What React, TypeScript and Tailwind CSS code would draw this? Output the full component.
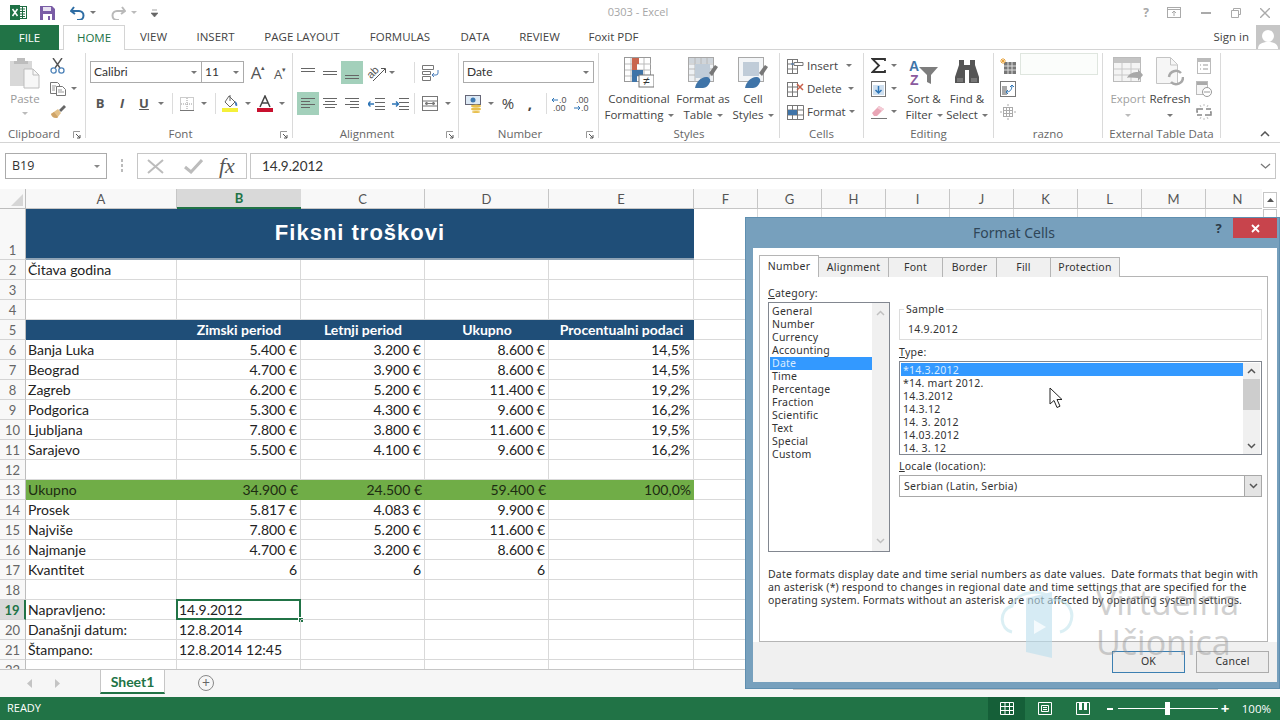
import type { ReactNode } from 'react';

const GRID =
  'grid grid-cols-[26px_151px_124px_124px_124px_145px_64px_64px_64px_64px_64px_64px_64px_64px_64px]';
const COLS = ['A', 'B', 'C', 'D', 'E', 'F', 'G', 'H', 'I', 'J', 'K', 'L', 'M', 'N'];

function Ic({ w, h, children }: { w: number; h: number; children: ReactNode }) {
  return (
    <svg width={w} height={h} viewBox={`0 0 ${w} ${h}`} className="shrink-0">
      {children}
    </svg>
  );
}

function Caret({ color = '#777777' }: { color?: string }) {
  return (
    <svg width="6" height="3" viewBox="0 0 6 3" className="shrink-0">
      <path d="M0 0h6L3 3z" fill={color} />
    </svg>
  );
}

function CaretCell({ w }: { w: string }) {
  return (
    <span className={`flex items-center justify-center ${w}`}>
      <Caret />
    </span>
  );
}

function Sep() {
  return <span className="h-[21px] w-px shrink-0 bg-[#dcdcdc]" />;
}

function Launcher() {
  return (
    <svg width="8" height="8" viewBox="0 0 8 8" className="absolute bottom-[-1px] right-[4px]">
      <path d="M.5 7V.5H7" fill="none" stroke="#9a9a9a" />
      <path d="M3 3l4 4M7 4v3H4" fill="none" stroke="#555" />
    </svg>
  );
}

function Group({
  w,
  label,
  launcher,
  children,
}: {
  w: string;
  label: string;
  launcher?: boolean;
  children: ReactNode;
}) {
  return (
    <div className={`flex h-[85px] shrink-0 flex-col border-r border-[#dadada] ${w}`}>
      <div className="h-[73px]">{children}</div>
      <div
        className={`relative h-[12px] text-center text-[11.5px] leading-[16px] text-[#666] ${launcher ? 'pr-[17px]' : ''}`}
      >
        {label}
        {launcher && <Launcher />}
      </div>
    </div>
  );
}

function Large({
  w,
  icon,
  lines,
  muted,
  caretOnly,
}: {
  w: string;
  icon: ReactNode;
  lines: string[];
  muted?: boolean;
  caretOnly?: boolean;
}) {
  return (
    <div className={`flex flex-col items-center leading-[16px] ${w} ${muted ? 'text-[#a0a0a0]' : ''}`}>
      <div className="flex h-[38px] items-center justify-center">{icon}</div>
      <span className="whitespace-nowrap">{lines[0]}</span>
      {caretOnly ? (
        <span className="flex h-[16px] items-center">
          <Caret color={muted ? '#bbbbbb' : '#777777'} />
        </span>
      ) : (
        <span className="flex items-center gap-[4px] whitespace-nowrap">
          {lines[1]}
          <Caret />
        </span>
      )}
    </div>
  );
}

function Tb({ w, on, children }: { w: string; on?: boolean; children: ReactNode }) {
  return (
    <span className={`flex h-full shrink-0 items-center justify-center ${w} ${on ? 'bg-[#a3d0bb]' : ''}`}>
      {children}
    </span>
  );
}

function Lines({ rows }: { rows: [number, number, number][] }) {
  return (
    <Ic w={16} h={14}>
      {rows.map(([x1, x2, y]) => (
        <path key={`${x1}-${y}`} d={`M${x1} ${y}.5H${x2}`} stroke="#666" />
      ))}
    </Ic>
  );
}

function Combo({ w, text, cls }: { w: string; text: string; cls?: string }) {
  return (
    <div
      className={`flex h-[22px] shrink-0 items-center justify-between border border-[#ababab] bg-white pl-[3px] pr-[4px] text-[12px] text-[#333] ${w} ${cls ?? ''}`}
    >
      <span>{text}</span>
      <Caret />
    </div>
  );
}

// ribbon drawings
const paste = (
  <Ic w={30} h={32}>
    <rect x="0" y="4" width="22" height="25" fill="#d8d8d8" />
    <path d="M7 4V1h8v3h3v3H4V4z" fill="#bdbdbd" />
    <path d="M14 12h9l6 6v13H14z" fill="#f7f7f7" stroke="#bdbdbd" />
    <path d="M23 12v6h6" fill="none" stroke="#bdbdbd" />
  </Ic>
);
const scissors = (
  <Ic w={15} h={16}>
    <path d="M3 0l7 10M12 0L5 10" stroke="#555" strokeWidth="1.4" />
    <circle cx="3.6" cy="12.5" r="2.6" fill="none" stroke="#4d82b8" strokeWidth="1.3" />
    <circle cx="11.4" cy="12.5" r="2.6" fill="none" stroke="#4d82b8" strokeWidth="1.3" />
  </Ic>
);
const copy = (
  <Ic w={16} h={14}>
    <path d="M.5.5h7l2 2v9h-9z" fill="#fff" stroke="#777" />
    <path d="M6.5 4.5h6l3 3v6h-9z" fill="#fff" stroke="#777" />
    <path d="M2 4h4M2 6h3M2 8h3M8 8h4M8 10h6" stroke="#999" />
  </Ic>
);
const brush = (
  <Ic w={17} h={15}>
    <path d="M9 6l5-5 2 2-5 5z" fill="#666" />
    <path d="M1 10l7-5 3 4-4 5c-3 0-5-1-6-4z" fill="#e3c088" />
    <path d="M1 10l3-2 4 5-1 1c-3 0-5-1-6-4z" fill="#cfa468" />
  </Ic>
);
const borders = (
  <Ic w={14} h={14}>
    <rect x=".5" y=".5" width="13" height="13" fill="none" stroke="#999" strokeDasharray="1 1" />
    <path d="M7 1v12M1 7h12" stroke="#999" strokeDasharray="1 1" />
    <path d="M0 13.5h14" stroke="#777" />
  </Ic>
);
const fillColor = (
  <Ic w={17} h={17}>
    <path d="M7 1l6 6-5 5-5-5z" fill="#fff" stroke="#666" />
    <path d="M8 0v6" stroke="#666" />
    <path d="M13 6l2 2c0 1 1 3-.5 3S13 9 13 8z" fill="#4a7ebb" />
    <rect x="0" y="13" width="16" height="4" fill="#f4f03a" />
  </Ic>
);
const fontColor = (
  <Ic w={16} h={17}>
    <path d="M3 12L8 1l5 11M5 8h6" fill="none" stroke="#444" strokeWidth="1.5" />
    <rect x="0" y="13" width="16" height="4" fill="#c8102e" />
  </Ic>
);
const orientation = (
  <svg width="22" height="18" viewBox="0 0 22 18" className="shrink-0 overflow-visible">
    <text
      x="1"
      y="12"
      fontSize="11"
      fontFamily="Liberation Sans"
      fill="#555"
      transform="rotate(-45 7 9)"
    >
      ab
    </text>
    <path d="M7 17L19 5M15 4.500h4.500V9" fill="none" stroke="#555" />
  </svg>
);
const wrap = (
  <Ic w={17} h={16}>
    <path d="M.5.5h11v4H.5zM.5 6.500h8v3h-8zM.5 11.500h8v4h-8z" fill="#fff" stroke="#777" />
    <path d="M16 5v3a2 2 0 0 1-2 2h-4M12 8l-2 2 2 2" fill="none" stroke="#4a7ebb" />
  </Ic>
);
const merge = (
  <Ic w={16} h={15}>
    <rect x=".5" y=".5" width="15" height="14" fill="#fff" stroke="#777" />
    <path d="M1 5h14M1 10h14M3 7.500h10M3 7.500l2-1.500v3zM13 7.500l-2-1.500v3z" fill="none" stroke="#777" />
  </Ic>
);
const indent = (arrowRight: boolean) => (
  <Ic w={17} h={12}>
    <path d="M7 .5h10M7 4.500h10M7 8.500h10M7 11.500h10" stroke="#666" />
    {arrowRight ? (
      <path d="M0 6h6M4 3.500L6.500 6 4 8.500" fill="none" stroke="#2e75b6" strokeWidth="1.4" />
    ) : (
      <path d="M6 6H0M2.500 3.500L0 6l2.500 2.500" fill="none" stroke="#2e75b6" strokeWidth="1.4" />
    )}
  </Ic>
);
const accounting = (
  <Ic w={18} h={18}>
    <rect x=".5" y=".5" width="15" height="9" fill="#dce9f5" stroke="#667" />
    <circle cx="8" cy="5" r="2.500" fill="#3d78b0" />
    <ellipse cx="11" cy="11" rx="5" ry="1.500" fill="#e8c04e" />
    <ellipse cx="11" cy="14" rx="5" ry="1.500" fill="#e8c04e" />
    <ellipse cx="11" cy="17" rx="4" ry="1" fill="#e8c04e" />
  </Ic>
);
const decimals = (top: string, bottom: string, arrowFirst: boolean) => (
  <svg width="20" height="18" viewBox="0 0 20 18" className="shrink-0 overflow-visible">
    <text x={arrowFirst ? 9 : 4} y="8" fontSize="9" fontFamily="Liberation Sans" fill="#555">
      {top}
    </text>
    <text x={arrowFirst ? 3 : 9} y="16" fontSize="9" fontFamily="Liberation Sans" fill="#555">
      {bottom}
    </text>
    {arrowFirst ? (
      <path d="M8 5H2M4 3L2 5l2 2" fill="none" stroke="#2e75b6" />
    ) : (
      <path d="M2 13h6M6 11l2 2-2 2" fill="none" stroke="#2e75b6" />
    )}
  </svg>
);
const conditional = (
  <Ic w={30} h={31}>
    <rect x=".5" y=".5" width="26" height="24" fill="#fff" stroke="#999" />
    <path d="M7 1v24M20 1v24M1 7h26M1 13h26M1 19h26" stroke="#bbb" />
    <rect x="8" y="1" width="7" height="6" fill="#c9664f" />
    <rect x="8" y="7" width="5" height="6" fill="#c9664f" />
    <rect x="8" y="13" width="11" height="6" fill="#3f74a8" />
    <rect x="8" y="19" width="5" height="6" fill="#3f74a8" />
    <rect x="15" y="18" width="15" height="12" fill="#fff" stroke="#777" />
    <text x="22.500" y="28" textAnchor="middle" fontSize="12" fontFamily="Liberation Sans" fill="#333">
      ≠
    </text>
  </Ic>
);
const tablePaint = (
  <Ic w={30} h={31}>
    <rect x=".5" y=".5" width="25" height="24" fill="#eef1f4" stroke="#a8a8a8" />
    <rect x="1" y="1" width="24" height="5" fill="#cfd5db" />
    <path d="M7 1v24M13 1v24M19 1v24M1 7h24M1 12h24M1 18h24" stroke="#b8b8b8" />
    <rect x="7" y="7" width="15" height="14" fill="#c0ccd8" />
    <path d="M21 16l6-8 3 2-6 9z" fill="#777" />
    <path d="M7 31c1-6 6-11 11-11 3 0 5 2 4 5-1 3-4 6-7 6z" fill="#3f74a8" />
  </Ic>
);
const cellPaint = (
  <Ic w={30} h={31}>
    <rect x=".5" y=".5" width="25" height="24" fill="#f3f5f7" stroke="#a8a8a8" />
    <rect x="5" y="5" width="16" height="14" fill="#c0ccd8" />
    <path d="M21 16l6-8 3 2-6 9z" fill="#777" />
    <path d="M7 31c1-6 6-11 11-11 3 0 5 2 4 5-1 3-4 6-7 6z" fill="#3f74a8" />
  </Ic>
);
const cellsIcon = (kind: 'insert' | 'delete' | 'format') => (
  <Ic w={17} h={16}>
    <rect x=".5" y="1.500" width="10" height="14" fill="#fff" stroke="#777" />
    <path d="M5.500 2v13M1 6h9M1 11h9" stroke="#777" />
    {kind === 'insert' && <path d="M7 4.500h9v3H7z" fill="#fff" stroke="#777" />}
    {kind === 'insert' && <path d="M7 6H4" stroke="#4a7ebb" />}
    {kind === 'delete' && <path d="M10 3l6 6M16 3l-6 6" stroke="#c8604a" strokeWidth="1.5" />}
    {kind === 'format' && <rect x="1" y="6" width="9" height="5" fill="#3f74a8" />}
    {kind === 'format' && <path d="M11 1.500h5.500v14H11M11 6h5M11 11h5" fill="none" stroke="#777" />}
  </Ic>
);
const sigma = (
  <Ic w={15} h={15}>
    <path d="M14 3V1H1.500L8 7.500 1.500 14H14v-2" fill="none" stroke="#333" strokeWidth="1.800" />
  </Ic>
);
const fillDown = (
  <Ic w={15} h={16}>
    <rect x=".5" y=".5" width="14" height="15" fill="#fff" stroke="#777" />
    <rect x="2" y="4" width="11" height="10" fill="#cfe0f0" />
    <path d="M7.500 5v7M4.500 9l3 3 3-3" fill="none" stroke="#2e75b6" strokeWidth="1.500" />
  </Ic>
);
const eraser = (
  <Ic w={17} h={14}>
    <path d="M1 8l7-7 5 3-7 7H3z" fill="#e9a6b6" />
    <path d="M8 1l5 3-2 2-5-3z" fill="#f3ccd6" />
    <path d="M0 13.500h16" stroke="#777" />
  </Ic>
);
const sortFilter = (
  <svg width="30" height="28" viewBox="0 0 30 28" className="shrink-0 overflow-visible">
    <text x="0" y="13" fontSize="14" fontWeight="700" fontFamily="Liberation Sans" fill="#3f74a8">
      A
    </text>
    <text x="1" y="27" fontSize="14" fontWeight="700" fontFamily="Liberation Sans" fill="#8a5a9e">
      Z
    </text>
    <path d="M10 9h19l-7 8v9l-4-2v-7z" fill="#7d7d7d" />
  </svg>
);
const binoculars = (
  <Ic w={26} h={24}>
    <path d="M5 0h5v5h6V0h5v5l4 12v6H15V10h-4v13H1v-6L5 5z" fill="#555" />
    <path d="M3 18h6v4H3zM17 18h6v4h-6z" fill="#777" />
  </Ic>
);
const newTable = (
  <Ic w={16} h={16}>
    <rect x="4" y="4" width="12" height="12" fill="#777" />
    <path d="M8 4v12M12 4v12M4 8h12M4 12h12" stroke="#ddd" />
    <path d="M3 0v6M0 3h6M1 1l4 4M5 1L1 5" stroke="#e8a33d" />
  </Ic>
);
const pivot = (
  <Ic w={16} h={16}>
    <rect x=".5" y=".5" width="15" height="15" fill="#fff" stroke="#777" />
    <rect x="2" y="5" width="5" height="9" fill="#a8a8a8" />
    <path d="M6 11c4 0 6-2 6-7M10 6l2-2 2 2M8 9l-2 2 2 2" fill="none" stroke="#2e75b6" />
  </Ic>
);
const moveTable = (
  <Ic w={16} h={16}>
    <rect x="3.500" y="3.500" width="9" height="9" fill="#fff" stroke="#aaa" />
    <path d="M6.500 4v8M9.500 4v8M4 6.500h8M4 9.500h8M8 0v2M8 14v2M0 8h2M14 8h2" stroke="#aaa" />
  </Ic>
);
const exportIcon = (
  <Ic w={30} h={30}>
    <rect x=".5" y=".5" width="27" height="24" fill="#f4f4f4" stroke="#bbb" />
    <rect x="1" y="1" width="26" height="5" fill="#c4c4c4" />
    <path d="M9 6v18M18 6v18M1 12h26M1 18h26" stroke="#c8c8c8" />
    <path d="M14 21c2-5 7-6 11-6v-3l5 6-5 6v-3c-4 0-8-1-11 0z" fill="#a8a8a8" />
  </Ic>
);
const refreshIcon = (
  <Ic w={28} h={30}>
    <path d="M.5.5h14l7 7v19H.5z" fill="#f6f6f6" stroke="#c4c4c4" />
    <path d="M14.500 1v7h7" fill="none" stroke="#c4c4c4" />
    <path d="M13 20a7 7 0 0 1 12-4M27 20a7 7 0 0 1-12 5" fill="none" stroke="#a8a8a8" strokeWidth="2.500" />
  </Ic>
);
const propsIcon = (
  <Ic w={14} h={16}>
    <rect x=".5" y=".5" width="13" height="15" fill="#fff" stroke="#bbb" />
    <rect x="1" y="1" width="12" height="3" fill="#bbb" />
    <path d="M3 7h1M6 7h5M3 11h1M6 11h5" stroke="#999" />
  </Ic>
);
const openBrowser = (
  <Ic w={16} h={16}>
    <rect x=".5" y=".5" width="11" height="13" fill="#f6f6f6" stroke="#bbb" />
    <rect x="1" y="1" width="10" height="3" fill="#aaa" />
    <circle cx="11" cy="11" r="4.500" fill="#fff" stroke="#999" />
    <path d="M8 11h6" stroke="#999" />
  </Ic>
);
const unlink = (
  <Ic w={16} h={16}>
    <path d="M2 8H1V5h6M14 8h1v3H9M1 11h5M15 5h-5" fill="none" stroke="#888" strokeWidth="1.500" />
    <path d="M8 0v2M4 1l1 2M12 1l-1 2M8 14v2M4 15l1-2M12 15l-1-2" stroke="#c0c0c0" />
  </Ic>
);

function IconRow({ icon, label, gap }: { icon: ReactNode; label: string; gap: string }) {
  return (
    <div className="flex h-[23px] items-center">
      {icon}
      <span className="ml-[3px]">{label}</span>
      <span className={gap}>
        <Caret />
      </span>
    </div>
  );
}

function Ribbon() {
  return (
    <div className="flex h-[93px] shrink-0 border-b border-[#d4d4d4] pt-[3px] text-[11.5px] text-[#444]">
      <Group w="w-[86px]" label="Clipboard" launcher>
        <div className="flex">
          <div className="flex w-[50px] flex-col items-center text-[#9a9a9a]">
            <div className="mt-[4px] h-[34px]">{paste}</div>
            <span className="leading-[16px]">Paste</span>
            <span className="mt-[5px]">
              <Caret color="#bbbbbb" />
            </span>
          </div>
          <div className="flex flex-col pt-px">
            <div className="flex h-[23px] items-center">{scissors}</div>
            <div className="flex h-[23px] items-center">
              {copy}
              <span className="ml-[5px]">
                <Caret />
              </span>
            </div>
            <div className="flex h-[23px] items-center">{brush}</div>
          </div>
        </div>
      </Group>
      <Group w="w-[207px]" label="Font" launcher>
        <div className="flex h-[30px] items-end pl-[4px]">
          <Combo w="w-[112px]" text="Calibri" cls="[font-family:Lato,sans-serif]" />
          <Combo w="w-[43px] -ml-px" text="11" cls="[font-family:Lato,sans-serif]" />
          <span className="ml-[3px] flex w-[22px] items-start justify-center text-[17px] leading-[20px] text-[#555]">
            A<span className="mt-[1px] text-[7px] leading-[7px]">▴</span>
          </span>
          <span className="flex w-[22px] items-start justify-center pt-[3px] text-[13px] leading-[17px] text-[#555]">
            A<span className="text-[7px] leading-[7px]">▾</span>
          </span>
        </div>
        <div className="mt-[9px] flex h-[23px] items-center pl-[3px]">
          <Tb w="w-[22px]">
            <span className="text-[13px] font-bold text-[#555]">B</span>
          </Tb>
          <Tb w="w-[22px]">
            <span className="text-[13px] font-bold italic text-[#555]">I</span>
          </Tb>
          <Tb w="w-[22px]">
            <span className="text-[13px] font-bold text-[#555] underline">U</span>
          </Tb>
          <CaretCell w="w-[12px]" />
          <span className="ml-[5px] flex">
            <Sep />
          </span>
          <Tb w="w-[28px]">{borders}</Tb>
          <CaretCell w="w-[6px]" />
          <span className="ml-[8px] flex">
            <Sep />
          </span>
          <Tb w="w-[29px]">{fillColor}</Tb>
          <CaretCell w="w-[5px]" />
          <Tb w="w-[30px]">{fontColor}</Tb>
          <CaretCell w="w-[4px]" />
        </div>
      </Group>
      <Group w="w-[166px]" label="Alignment" launcher>
        <div className="mt-[8px] flex h-[23px] items-center pl-[4px]">
          <Tb w="w-[22px]">
            <Lines rows={[[1, 15, 2], [1, 15, 5]]} />
          </Tb>
          <Tb w="w-[22px]">
            <Lines rows={[[1, 15, 5], [1, 15, 8]]} />
          </Tb>
          <Tb w="w-[22px]" on>
            <Lines rows={[[1, 15, 9], [1, 15, 12]]} />
          </Tb>
          <Tb w="w-[24px] ml-[2px]">{orientation}</Tb>
          <CaretCell w="w-[6px]" />
          <span className="ml-[19px] flex">
            <Sep />
          </span>
          <Tb w="w-[30px]">{wrap}</Tb>
        </div>
        <div className="mt-[8px] flex h-[23px] items-center pl-[4px]">
          <Tb w="w-[22px]" on>
            <Lines rows={[[1, 15, 1], [1, 10, 4], [1, 15, 7], [1, 10, 10]]} />
          </Tb>
          <Tb w="w-[22px]">
            <Lines rows={[[1, 15, 1], [3, 13, 4], [1, 15, 7], [3, 13, 10]]} />
          </Tb>
          <Tb w="w-[22px]">
            <Lines rows={[[1, 15, 1], [6, 15, 4], [1, 15, 7], [6, 15, 10]]} />
          </Tb>
          <Tb w="w-[23px] ml-[2px]">{indent(false)}</Tb>
          <Tb w="w-[24px]">{indent(true)}</Tb>
          <span className="ml-[2px] flex">
            <Sep />
          </span>
          <Tb w="w-[30px]">{merge}</Tb>
          <CaretCell w="w-[6px]" />
        </div>
      </Group>
      <Group w="w-[140px]" label="Number" launcher>
        <div className="flex h-[30px] items-end pl-[4px]">
          <Combo w="w-[131px]" text="Date" cls="[font-family:Lato,sans-serif]" />
        </div>
        <div className="mt-[9px] flex h-[23px] items-center pl-[4px]">
          <Tb w="w-[22px]">{accounting}</Tb>
          <CaretCell w="w-[12px]" />
          <Tb w="w-[22px]">
            <span className="text-[15px] text-[#444]">%</span>
          </Tb>
          <Tb w="w-[22px]">
            <span className="text-[15px] font-bold text-[#444]">,</span>
          </Tb>
          <span className="ml-[5px] flex">
            <Sep />
          </span>
          <Tb w="w-[22px] ml-[2px]">{decimals('.0', '.00', true)}</Tb>
          <Tb w="w-[22px]">{decimals('.00', '.0', false)}</Tb>
        </div>
      </Group>
      <Group w="w-[181px]" label="Styles">
        <div className="flex pl-[3px]">
          <Large w="w-[74px]" icon={conditional} lines={['Conditional', 'Formatting']} />
          <Large w="w-[54px]" icon={tablePaint} lines={['Format as', 'Table']} />
          <Large w="w-[46px]" icon={cellPaint} lines={['Cell', 'Styles']} />
        </div>
      </Group>
      <Group w="w-[84px]" label="Cells">
        <div className="flex flex-col pl-[7px] pt-px">
          <IconRow icon={cellsIcon('insert')} label="Insert" gap="ml-[8px]" />
          <IconRow icon={cellsIcon('delete')} label="Delete" gap="ml-[6px]" />
          <IconRow icon={cellsIcon('format')} label="Format" gap="ml-[3px]" />
        </div>
      </Group>
      <Group w="w-[130px]" label="Editing">
        <div className="flex">
          <div className="flex w-[35px] flex-col pl-[7px] pt-px">
            <div className="flex h-[23px] items-center gap-[5px]">
              {sigma}
              <Caret />
            </div>
            <div className="flex h-[23px] items-center gap-[5px]">
              {fillDown}
              <Caret />
            </div>
            <div className="flex h-[23px] items-center gap-[3px]">
              {eraser}
              <Caret />
            </div>
          </div>
          <Large w="w-[50px]" icon={sortFilter} lines={['Sort &', 'Filter']} />
          <Large w="w-[36px]" icon={binoculars} lines={['Find &', 'Select']} />
        </div>
      </Group>
      <Group w="w-[109px]" label="razno">
        <div className="flex">
          <div className="flex flex-col pl-[6px] pt-px">
            <div className="flex h-[23px] items-center">{newTable}</div>
            <div className="flex h-[23px] items-center">{pivot}</div>
            <div className="flex h-[23px] items-center">{moveTable}</div>
          </div>
          <div className="ml-[4px] h-[22px] w-[78px] border border-[#dfe6df] bg-[#fbfdfb]" />
        </div>
      </Group>
      <Group w="w-[118px]" label="External Table Data">
        <div className="flex pl-[2px]">
          <Large w="w-[46px]" icon={exportIcon} lines={['Export']} muted caretOnly />
          <Large w="w-[38px]" icon={refreshIcon} lines={['Refresh']} caretOnly />
          <div className="ml-[7px] flex w-[16px] flex-col items-center pt-px">
            <div className="flex h-[23px] items-center">{propsIcon}</div>
            <div className="flex h-[23px] items-center">{openBrowser}</div>
            <div className="flex h-[23px] items-center">{unlink}</div>
          </div>
        </div>
      </Group>
      <svg width="10" height="6" viewBox="0 0 10 6" className="mb-[5px] ml-auto mr-[10px] self-end">
        <path d="M1 5l4-4 4 4" fill="none" stroke="#555" strokeWidth="1.500" />
      </svg>
    </div>
  );
}

function TitleBar() {
  return (
    <div className="grid h-[25px] shrink-0 grid-cols-[1fr_auto_1fr] items-center">
      <div className="flex items-center pl-[10px]">
        <Ic w={17} h={15}>
          <rect x="7.500" y="1.500" width="9" height="12" fill="#fff" stroke="#1e6b41" />
          <path d="M10 4h5M10 6.500h5M10 9h5M10 11.500h5M12.500 2v11" stroke="#1e6b41" />
          <rect x="0" y="0" width="10" height="15" fill="#1e7145" />
          <path d="M2.500 4l5 7M7.500 4l-5 7" stroke="#fff" strokeWidth="1.500" />
        </Ic>
        <span className="ml-[13px]">
          <Ic w={15} h={14}>
            <path d="M0 0h12l3 3v11H0z" fill="#7a5da6" />
            <rect x="3" y="1" width="8" height="4" fill="#e8e2f1" />
            <rect x="3" y="8" width="9" height="6" fill="#fff" />
            <rect x="8" y="10" width="2" height="4" fill="#7a5da6" />
          </Ic>
        </span>
        <span className="ml-[15px]">
          <Ic w={15} h={14}>
            <path d="M4 1L1 5l4 3M1.500 5H9a4.500 4.500 0 0 1 0 9H7" fill="none" stroke="#2e6da4" strokeWidth="2" />
          </Ic>
        </span>
        <span className="ml-[5px]">
          <Caret />
        </span>
        <span className="ml-[15px]">
          <Ic w={15} h={14}>
            <path d="M11 1l3 4-4 3M13.500 5H6a4.500 4.500 0 0 0 0 9h2" fill="none" stroke="#b9b9b9" strokeWidth="2" />
          </Ic>
        </span>
        <span className="ml-[5px]">
          <Caret color="#bbbbbb" />
        </span>
        <span className="ml-[14px]">
          <Ic w={7} h={8}>
            <path d="M1 1h5M0 4h7L3.500 8z" fill="#666" stroke="#666" strokeWidth=".6" />
          </Ic>
        </span>
      </div>
      <span className="pr-[4px] text-[11px] text-[#a6a6a6]">0303 - Excel</span>
      <div className="flex items-center justify-end text-[#a8a8a8]">
        <span className="mr-[18px] text-[12px] font-bold">?</span>
        <span className="mr-[20px]">
          <Ic w={14} h={11}>
            <rect x=".5" y=".5" width="13" height="10" fill="none" stroke="#aaa" />
            <path d="M0 2.500h14M7 9V4M5 6l2-2 2 2" fill="none" stroke="#aaa" />
          </Ic>
        </span>
        <span className="mr-[20px]">
          <Ic w={10} h={2}>
            <rect width="10" height="2" fill="#aaa" />
          </Ic>
        </span>
        <span className="mr-[19px]">
          <Ic w={10} h={10}>
            <path d="M2.500 2.500V.5h7v6H7.500M.5 2.500h7v7h-7z" fill="none" stroke="#aaa" />
          </Ic>
        </span>
        <span className="mr-[10px]">
          <Ic w={10} h={10}>
            <path d="M0 0l10 10M10 0L0 10" stroke="#aaa" strokeWidth="1.400" />
          </Ic>
        </span>
      </div>
    </div>
  );
}

function TabBar() {
  const tabs: [string, string][] = [
    ['VIEW', 'w-[57px]'],
    ['INSERT', 'w-[67px]'],
    ['PAGE LAYOUT', 'w-[106px]'],
    ['FORMULAS', 'w-[90px]'],
    ['DATA', 'w-[60px]'],
    ['REVIEW', 'w-[69px]'],
    ['Foxit PDF', 'w-[79px]'],
  ];
  return (
    <div className="flex h-[25px] shrink-0 items-stretch border-b border-[#d4d4d4] text-[11.5px] text-[#444]">
      <div className="flex h-[25px] w-[59px] items-center justify-center bg-[#217346] text-white">FILE</div>
      <div className="ml-[4px] flex h-[25px] w-[62px] items-center justify-center border-x border-t border-[#d4d4d4] bg-white text-[#217346]">
        HOME
      </div>
      {tabs.map(([name, w]) => (
        <div key={name} className={`flex items-center justify-center ${w}`}>
          {name}
        </div>
      ))}
      <span className="ml-auto flex items-center pr-[7px]">Sign in</span>
      <div className="flex h-[24px] w-[24px] items-end justify-center overflow-hidden bg-[#c6c6c6]">
        <Ic w={20} h={21}>
          <circle cx="10" cy="8" r="6" fill="#fff" />
          <path d="M0 21c0-5 4-7 10-7s10 2 10 7z" fill="#fff" />
        </Ic>
      </div>
    </div>
  );
}

function FormulaBar() {
  return (
    <div className="flex h-[46px] shrink-0 items-start pl-[5px] pt-[10px]">
      <div className="flex h-[26px] w-[102px] items-center justify-between border border-[#ababab] bg-white pl-[6px] pr-[6px] text-[12.5px] text-[#333]">
        B19
        <Caret color="#888888" />
      </div>
      <span className="ml-[14px] mt-[6px] w-[2px]">
        <span className="block h-[3px] w-[2px] bg-[#bbb]" />
        <span className="mt-[2px] block h-[3px] w-[2px] bg-[#bbb]" />
        <span className="mt-[2px] block h-[3px] w-[2px] bg-[#bbb]" />
      </span>
      <div className="ml-[14px] flex h-[26px] w-[110px] items-center border border-[#c6c6c6] bg-white">
        <span className="ml-[9px]">
          <Ic w={17} h={15}>
            <path d="M1 1l15 13M16 1L1 14" stroke="#bcbcbc" strokeWidth="2" />
          </Ic>
        </span>
        <span className="ml-[20px]">
          <Ic w={19} h={15}>
            <path d="M1 8l6 5L18 1" fill="none" stroke="#bcbcbc" strokeWidth="3" />
          </Ic>
        </span>
        <span className="ml-[16px] [font-family:'Liberation_Serif',serif] text-[22px] italic leading-none text-[#555]">
          fx
        </span>
      </div>
      <div className="ml-[3px] flex h-[26px] w-[1026px] items-center justify-between border border-[#c6c6c6] bg-white pl-[11px] pr-[4px] [font-family:Lato,sans-serif] text-[13.5px] text-[#333]">
        14.9.2012
        <svg width="11" height="6" viewBox="0 0 11 6">
          <path d="M1 1l4.500 4L10 1" fill="none" stroke="#777" strokeWidth="1.300" />
        </svg>
      </div>
    </div>
  );
}

type RowDef = {
  n: number;
  a?: string;
  b?: string;
  c?: string;
  d?: string;
  e?: string;
  kind?: 'head' | 'total';
  left?: boolean;
};

const ROWS: RowDef[] = [
  { n: 2, a: 'Čitava godina' },
  { n: 3 },
  { n: 4 },
  { n: 5, b: 'Zimski period', c: 'Letnji period', d: 'Ukupno', e: 'Procentualni podaci', kind: 'head' },
  { n: 6, a: 'Banja Luka', b: '5.400 €', c: '3.200 €', d: '8.600 €', e: '14,5%' },
  { n: 7, a: 'Beograd', b: '4.700 €', c: '3.900 €', d: '8.600 €', e: '14,5%' },
  { n: 8, a: 'Zagreb', b: '6.200 €', c: '5.200 €', d: '11.400 €', e: '19,2%' },
  { n: 9, a: 'Podgorica', b: '5.300 €', c: '4.300 €', d: '9.600 €', e: '16,2%' },
  { n: 10, a: 'Ljubljana', b: '7.800 €', c: '3.800 €', d: '11.600 €', e: '19,5%' },
  { n: 11, a: 'Sarajevo', b: '5.500 €', c: '4.100 €', d: '9.600 €', e: '16,2%' },
  { n: 12 },
  { n: 13, a: 'Ukupno', b: '34.900 €', c: '24.500 €', d: '59.400 €', e: '100,0%', kind: 'total' },
  { n: 14, a: 'Prosek', b: '5.817 €', c: '4.083 €', d: '9.900 €' },
  { n: 15, a: 'Najviše', b: '7.800 €', c: '5.200 €', d: '11.600 €' },
  { n: 16, a: 'Najmanje', b: '4.700 €', c: '3.200 €', d: '8.600 €' },
  { n: 17, a: 'Kvantitet', b: '6', c: '6', d: '6' },
  { n: 18 },
  { n: 19, a: 'Napravljeno:', b: '14.9.2012', left: true },
  { n: 20, a: 'Današnji datum:', b: '12.8.2014', left: true },
  { n: 21, a: 'Štampano:', b: '12.8.2014 12:45', left: true },
  { n: 22 },
];

function RowHead({ n, tall }: { n: number; tall?: boolean }) {
  const active = n === 19;
  return (
    <div
      className={`flex justify-center border-b border-[#d4d4d4] text-[13px] ${tall ? 'items-end' : 'items-center'} ${
        active
          ? 'border-r-2 border-r-[#217346] bg-[#d9d9d9] font-bold text-[#217346]'
          : 'border-r border-r-[#bdbdbd] bg-[#f8f8f8] text-[#666]'
      }`}
    >
      {n}
    </div>
  );
}

function Row({ row }: { row: RowDef }) {
  const band =
    row.kind === 'head'
      ? 'bg-[#1f4e78] font-bold text-white justify-center'
      : row.kind === 'total'
        ? 'bg-[#70ad47] text-[#1d2b12] justify-end'
        : 'border-b border-r border-[#d9d9d9] text-[#222] justify-end';
  const first =
    row.kind === 'head'
      ? 'bg-[#1f4e78]'
      : row.kind === 'total'
        ? 'bg-[#70ad47] text-[#1d2b12]'
        : 'border-b border-r border-[#d9d9d9] text-[#222]';
  const vals = [row.b, row.c, row.d, row.e];
  return (
    <div className={`${GRID} h-[20px]`}>
      <RowHead n={row.n} />
      <div className={`flex items-center whitespace-nowrap pl-[2px] ${first}`}>{row.a}</div>
      {vals.map((v, i) => {
        const selected = row.n === 19 && i === 0;
        return (
          <div
            key={i}
            className={`relative flex items-center whitespace-nowrap px-[3px] ${band} ${row.left ? '!justify-start !pl-[2px]' : ''}`}
          >
            {v}
            {selected && (
              <>
                <span className="absolute inset-x-[-1px] bottom-[-1px] top-[-1px] border-2 border-[#217346]" />
                <span className="absolute bottom-[-4px] right-[-4px] h-[6px] w-[6px] border border-white bg-[#217346]" />
              </>
            )}
          </div>
        );
      })}
      {COLS.slice(5).map((c) => (
        <div key={c} className="border-b border-r border-[#d9d9d9]" />
      ))}
    </div>
  );
}

function Sheet() {
  return (
    <div className="flex min-h-0 flex-1 overflow-hidden bg-white [font-family:Lato,sans-serif] text-[14px] leading-[18px]">
      <div className="min-w-0 flex-1 overflow-hidden">
        <div className={`${GRID} h-[20px] text-[#555]`}>
          <div className="flex items-end justify-end border-b border-r border-[#bdbdbd] bg-[#f8f8f8] p-[2px]">
            <svg width="12" height="12" viewBox="0 0 12 12">
              <path d="M12 0v12H0z" fill="#d6d6d6" />
            </svg>
          </div>
          {COLS.map((c) => (
            <div
              key={c}
              className={`flex items-center justify-center text-[13px] ${
                c === 'B'
                  ? 'border-b-2 border-[#217346] bg-[#d9d9d9] font-bold text-[#217346]'
                  : 'border-b border-r border-[#c6c6c6] bg-[#f8f8f8]'
              }`}
            >
              {c}
            </div>
          ))}
        </div>
        <div className={`${GRID} h-[51px]`}>
          <RowHead n={1} tall />
          <div className="col-span-5 flex items-center justify-center border-b-2 border-[#8fa3b5] bg-[#1f4e78] pb-[2px] [font-family:'Liberation_Sans',sans-serif] text-[22px] font-bold tracking-[1px] text-white">
            Fiksni troškovi
          </div>
          {COLS.slice(5).map((c) => (
            <div key={c} className="border-b border-r border-[#d9d9d9]" />
          ))}
        </div>
        {ROWS.map((r) => (
          <Row key={r.n} row={r} />
        ))}
      </div>
      <div className="flex w-[18px] shrink-0 flex-col pl-px pt-[3px]">
        <div className="flex h-[16px] w-[14px] items-center justify-center border border-[#c6c6c6] bg-white">
          <svg width="7" height="4" viewBox="0 0 7 4">
            <path d="M0 4h7L3.500 0z" fill="#555" />
          </svg>
        </div>
        <div className="mt-px h-[40px] w-[14px] border border-[#c6c6c6] bg-white" />
      </div>
    </div>
  );
}

function SheetTabs() {
  return (
    <div className="flex h-[28px] shrink-0 items-start border-t border-[#c6c6c6] bg-[#f6f6f6]">
      <div className="flex h-[27px] w-[100px] items-center pl-[27px]">
        <Ic w={6} h={9}>
          <path d="M5 0v9L0 4.500z" fill="#c4c4c4" />
        </Ic>
        <span className="ml-[22px]">
          <Ic w={6} h={9}>
            <path d="M0 0v9l5-4.500z" fill="#c4c4c4" />
          </Ic>
        </span>
      </div>
      <div className="flex h-[24px] w-[65px] items-center justify-center border-x border-b-2 border-[#c6c6c6] border-b-[#217346] bg-white [font-family:Lato,sans-serif] text-[14px] font-bold text-[#217346]">
        Sheet1
      </div>
      <div className="ml-[33px] mt-[5px] flex h-[16px] w-[16px] items-center justify-center rounded-full border border-[#888] text-[14px] leading-none text-[#666]">
        +
      </div>
      <div className="ml-[579px] h-[20px] w-[425px] border border-[#c6c6c6] bg-white" />
    </div>
  );
}

function StatusBar() {
  return (
    <div className="flex h-[23px] shrink-0 items-center bg-[#217346] pl-[7px] text-[11px] text-white">
      READY
      <div className="ml-auto flex h-full items-center">
        <div className="flex h-full w-[37px] items-center justify-center bg-[#155f38]">
          <Ic w={14} h={13}>
            <path d="M.5.5h13v12H.5zM5 1v11M9.500 1v11M1 4.500h12M1 8.500h12" fill="none" stroke="#fff" />
          </Ic>
        </div>
        <div className="flex h-full w-[39px] items-center justify-center">
          <Ic w={14} h={13}>
            <path d="M.5.5h13v12H.5zM3.500 3.500h7v6h-7zM5 5.500h4M5 7.500h4" fill="none" stroke="#fff" />
          </Ic>
        </div>
        <div className="flex h-full w-[38px] items-center justify-center">
          <Ic w={14} h={13}>
            <path d="M.5.5h13v12H.5z" fill="none" stroke="#fff" />
            <path d="M3 1h3v7H3zM8 1h3v7H8z" fill="#fff" />
          </Ic>
        </div>
        <span className="ml-[5px] h-[2px] w-[6px] bg-white" />
        <div className="relative ml-[5px] h-px w-[100px] bg-white">
          <span className="absolute left-[47px] top-[-6px] h-[13px] w-[5px] bg-white" />
        </div>
        <span className="ml-[3px] flex w-[8px] items-center justify-center text-[15px] font-bold leading-none">+</span>
        <span className="w-[51px] pr-[9px] text-right text-[11.5px]">100%</span>
      </div>
    </div>
  );
}

function ListItems({ items, active, cls }: { items: string[]; active: string; cls: string }) {
  return (
    <>
      {items.map((t) => (
        <div
          key={t}
          className={`h-[13px] whitespace-nowrap pl-[2px] ${cls} ${t === active ? 'bg-[#3399ff] text-[#d9ecff]' : ''}`}
        >
          {t}
        </div>
      ))}
    </>
  );
}

function Chev({ up, color = '#555' }: { up?: boolean; color?: string }) {
  return (
    <svg width="9" height="6" viewBox="0 0 9 6">
      <path d={up ? 'M1 5l3.500-3.500L8 5' : 'M1 1l3.500 3.500L8 1'} fill="none" stroke={color} strokeWidth="1.500" />
    </svg>
  );
}

function Dialog() {
  const tabs: [string, string][] = [
    ['Alignment', 'w-[70px]'],
    ['Font', 'w-[54px]'],
    ['Border', 'w-[54px]'],
    ['Fill', 'w-[54px]'],
    ['Protection', 'w-[69px]'],
  ];
  return (
    <div className="absolute left-[745px] top-[217px] flex h-[472px] w-[535px] flex-col border border-[#5f8fb0] bg-[#77a0bd] pl-[7px] pr-[2px] [font-family:'Noto_Sans',sans-serif] text-[10.5px] tracking-[0.25px] text-[#333]">
      <div className="relative flex h-[30px] shrink-0 items-center justify-center pb-[2px] pr-[2px]">
        <span className="text-[14px] tracking-normal text-[#2f4658]">Format Cells</span>
        <span className="absolute right-[55px] top-px text-[13px] font-bold text-[#2b3b48]">?</span>
        <span className="absolute right-0 top-0 flex h-[20px] w-[44px] items-center justify-center bg-[#c8444c]">
          <Ic w={9} h={9}>
            <path d="M1 1l7 7M8 1L1 8" stroke="#fff" strokeWidth="1.800" />
          </Ic>
        </span>
      </div>
      <div className="flex min-h-0 flex-1 flex-col bg-white">
        <div className="flex flex-1 flex-col pl-[6px] pr-[9px] pt-[7px]">
          <div className="relative z-10 flex h-[22px] items-end">
            <div className="flex h-[22px] w-[60px] items-center justify-center border-x border-t border-[#b5b5b5] bg-white">
              Number
            </div>
            {tabs.map(([t, w]) => (
              <div
                key={t}
                className={`flex h-[20px] items-center justify-center border-r border-t border-[#b5b5b5] bg-[#f0f0f0] pt-px ${w}`}
              >
                {t}
              </div>
            ))}
          </div>
          <div className="-mt-px flex h-[366px] flex-col border border-[#b5b5b5] pl-[8px] pt-[10px]">
            <div className="flex">
              <div className="w-[122px]">
                <div className="h-[15px] leading-[13px]">
                  <span className="underline">C</span>ategory:
                </div>
                <div className="flex h-[250px] border border-[#828790] bg-white pl-px pt-[2px]">
                  <div className="flex-1">
                    <ListItems
                      cls="leading-[13px]"
                      active="Date"
                      items={[
                        'General',
                        'Number',
                        'Currency',
                        'Accounting',
                        'Date',
                        'Time',
                        'Percentage',
                        'Fraction',
                        'Scientific',
                        'Text',
                        'Special',
                        'Custom',
                      ]}
                    />
                  </div>
                  <div className="-mt-[2px] flex w-[17px] flex-col items-center justify-between bg-[#f0f0f0] py-[7px]">
                    <Chev up color="#c0c0c0" />
                    <Chev color="#c0c0c0" />
                  </div>
                </div>
              </div>
              <div className="ml-[9px] w-[363px]">
                <div className="relative mt-[22px] h-[31px] border border-[#dcdcdc] pl-[8px] pt-[13px] leading-[13px]">
                  <span className="absolute left-[4px] top-[-7px] bg-white px-[2px]">Sample</span>
                  14.9.2012
                </div>
                <div className="mt-[6px] h-[13px] leading-[13px]">
                  <span className="underline">T</span>ype:
                </div>
                <div className="mt-[2px] flex h-[94px] border border-[#828790] pl-px pr-px pt-px">
                  <div className="flex-1 overflow-hidden">
                    <ListItems
                      cls="leading-[15px]"
                      active="*14.3.2012"
                      items={[
                        '*14.3.2012',
                        '*14. mart 2012.',
                        '14.3.2012',
                        '14.3.12',
                        '14. 3. 2012',
                        '14.03.2012',
                        '14. 3. 12',
                      ]}
                    />
                  </div>
                  <div className="flex w-[17px] flex-col items-center bg-[#f0f0f0]">
                    <span className="flex h-[16px] items-center">
                      <Chev up />
                    </span>
                    <span className="h-[31px] w-full bg-[#cdcdcd]" />
                    <span className="mt-auto flex h-[16px] items-center">
                      <Chev />
                    </span>
                  </div>
                </div>
                <div className="mt-[5px] h-[13px] leading-[13px]">
                  <span className="underline">L</span>ocale (location):
                </div>
                <div className="mt-[2px] flex h-[22px] items-center justify-between border border-[#a8a8a8] pl-[4px]">
                  <span className="pt-[2px]">Serbian (Latin, Serbia)</span>
                  <span className="flex h-full w-[17px] items-center justify-center border-l border-[#a8a8a8] bg-[#e4e4e4]">
                    <Chev />
                  </span>
                </div>
              </div>
            </div>
            <div className="mt-[16px] whitespace-pre leading-[13px] tracking-[0.18px]">
              <div>Date formats display date and time serial numbers as date values.  Date formats that begin with</div>
              <div>an asterisk (*) respond to changes in regional date and time settings that are specified for the</div>
              <div>operating system. Formats without an asterisk are not affected by operating system settings.</div>
            </div>
          </div>
        </div>
        <div className="flex h-[40px] shrink-0 items-start justify-end gap-[11px] bg-[#f0f0f0] pr-[8px] pt-[9px]">
          <div className="flex h-[22px] w-[73px] items-center justify-center border border-[#3c7fb1] bg-[#ececec]">OK</div>
          <div className="flex h-[22px] w-[73px] items-center justify-center border border-[#acacac] bg-[#ececec]">Cancel</div>
        </div>
      </div>
      <div className="h-[7px] shrink-0" />
    </div>
  );
}

function Watermark() {
  return (
    <div className="pointer-events-none absolute left-[998px] top-[582px] flex w-[260px]">
      <svg width="84" height="78" viewBox="0 0 84 78" className="mt-[2px] shrink-0 opacity-60">
        <path
          d="M14 48C2 46 0 26 14 22 20 6 46 4 54 16c14-2 24 10 18 24-2 4-6 7-10 8"
          fill="none"
          stroke="#c4e6ee"
          strokeWidth="3"
        />
        <path d="M28 14l26-6v66l-26-6z" fill="#bcdfee" />
        <path d="M36 36l12 7-12 7z" fill="#eef8fc" />
      </svg>
      <div className="ml-[14px] [font-family:'Open_Sans',sans-serif] text-[34px] leading-[40px] text-[#8c8c8c] opacity-40">
        <div>Virtuelna</div>
        <div>Učionica</div>
      </div>
    </div>
  );
}

function Cursor() {
  return (
    <svg width="14" height="22" viewBox="0 0 14 22" className="absolute left-[1049px] top-[387px]">
      <path d="M1 1v16l4-3.500 3 7 3-1.300-3-6.700h5z" fill="#fff" stroke="#222" />
    </svg>
  );
}

export default function App() {
  return (
    <div className="relative flex h-[720px] w-[1280px] flex-col overflow-hidden bg-white [font-family:'Open_Sans',sans-serif]">
      <TitleBar />
      <TabBar />
      <Ribbon />
      <FormulaBar />
      <Sheet />
      <SheetTabs />
      <StatusBar />
      <Dialog />
      <Watermark />
      <Cursor />
    </div>
  );
}
